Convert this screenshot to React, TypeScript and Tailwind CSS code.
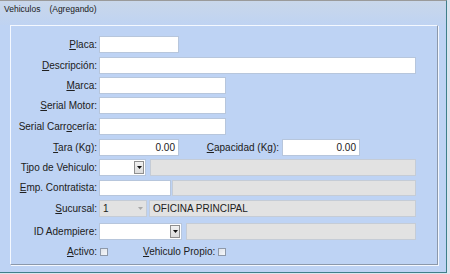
import React from "react";

const font = { fontFamily: '"Liberation Sans", Arial, sans-serif' };

function Lbl({ text, u, w = "w-[86px]" }: { text: string; u?: number; w?: string }) {
  let content: React.ReactNode = text;
  if (u !== undefined && u >= 0) {
    content = (
      <>
        {text.slice(0, u)}
        <span className="underline decoration-1 underline-offset-[1px]">{text[u]}</span>
        {text.slice(u + 1)}
      </>
    );
  }
  return (
    <div className={`${w} shrink-0 text-right text-[10px] leading-none text-[#202020] whitespace-nowrap`}>
      {content}
    </div>
  );
}

function Input({ w, value, right }: { w: string; value?: string; right?: boolean }) {
  return (
    <div
      className={`${w} h-full shrink-0 bg-white border border-[#b7c6dc] text-[10px] leading-none text-[#202020] flex items-center ${
        right ? "justify-end pr-[3px]" : "pl-[3px]"
      }`}
    >
      {value}
    </div>
  );
}

function Grey({ w, value, ml }: { w: string; value?: string; ml: string }) {
  return (
    <div
      className={`${w} ${ml} h-full shrink-0 bg-[#e2e2e2] border border-[#c5ccd6] text-[10px] leading-none text-[#202020] flex items-center pl-[3px]`}
    >
      {value}
    </div>
  );
}

function Arrow({ color = "#111" }: { color?: string }) {
  return (
    <svg width="5" height="3" viewBox="0 0 5 3">
      <path d="M0 0H5L2.5 3Z" fill={color} />
    </svg>
  );
}

function Combo({ w, value, disabled }: { w: string; value?: string; disabled?: boolean }) {
  return (
    <div
      className={`${w} h-full shrink-0 border ${
        disabled ? "bg-[#e2e2e2] border-[#c5ccd6]" : "bg-white border-[#b7c6dc]"
      } flex items-center justify-between pl-[3px] pr-[1px] text-[10px] leading-none text-[#202020]`}
    >
      <span>{value}</span>
      {disabled ? (
        <div className="w-[10px] h-[13px] flex items-center justify-center">
          <Arrow color="#a8a8a8" />
        </div>
      ) : (
        <div className="w-[10px] h-[13px] bg-gradient-to-b from-[#f2f2f2] to-[#dcdcdc] border border-[#8f8f8f] flex items-center justify-center">
          <Arrow />
        </div>
      )}
    </div>
  );
}

function Row({ mt, h = "h-[17px]", children }: { mt: string; h?: string; children: React.ReactNode }) {
  return <div className={`flex items-center ${mt} ${h}`}>{children}</div>;
}

export default function App() {
  return (
    <div className="w-[450px] h-[274px] bg-[#dbe5ef] overflow-hidden" style={font}>
      <div className="w-[447px] h-[273px] bg-[#bed3f4] border-t border-[#9a9a9a] border-r border-b border-r-[#3f7f8a] border-b-[#3f7f8a] flex flex-col">
        <div className="h-[24px] shrink-0 bg-gradient-to-b from-[#c9d7ea] to-[#bfd3f2] flex items-start pt-[4px] pl-[4px] text-[8.5px] leading-none text-[#1a1a1a]">
          <span>Vehiculos</span>
          <span className="ml-[9px]">(Agregando)</span>
        </div>
        <div className="ml-[10px] w-[428px] h-[240px] border-t border-l border-t-[#f4f8ff] border-l-[#f4f8ff] border-r border-b border-r-[#8b98ab] border-b-[#8b98ab] shadow-[1px_1px_0_#f4f8ff] flex flex-col">
          <Row mt="mt-[10px]">
            <Lbl text="Placa:" u={0} />
            <div className="ml-[2px] h-full flex">
              <Input w="w-[80px]" />
            </div>
          </Row>
          <Row mt="mt-[4px]">
            <Lbl text="Descripción:" u={0} />
            <div className="ml-[2px] h-full flex">
              <Input w="w-[317px]" />
            </div>
          </Row>
          <Row mt="mt-[3px]">
            <Lbl text="Marca:" u={0} />
            <div className="ml-[2px] h-full flex">
              <Input w="w-[127px]" />
            </div>
          </Row>
          <Row mt="mt-[3px]">
            <Lbl text="Serial Motor:" u={0} />
            <div className="ml-[2px] h-full flex">
              <Input w="w-[127px]" />
            </div>
          </Row>
          <Row mt="mt-[4px]">
            <Lbl text="Serial Carrocería:" u={11} />
            <div className="ml-[2px] h-full flex">
              <Input w="w-[127px]" />
            </div>
          </Row>
          <Row mt="mt-[4px]">
            <Lbl text="Tara (Kg):" u={0} />
            <div className="ml-[2px] h-full flex items-center">
              <Input w="w-[80px]" value="0.00" right />
              <Lbl text="Capacidad (Kg):" u={0} w="w-[100px]" />
              <div className="ml-[3px] h-full flex">
                <Input w="w-[78px]" value="0.00" right />
              </div>
            </div>
          </Row>
          <Row mt="mt-[3px]">
            <Lbl text="Tipo de Vehiculo:" u={1} />
            <div className="ml-[2px] h-full flex">
              <Combo w="w-[47px]" />
              <Grey w="w-[266px]" ml="ml-[4px]" />
            </div>
          </Row>
          <Row mt="mt-[4px]" h="h-[16px]">
            <Lbl text="Emp. Contratista:" u={0} />
            <div className="ml-[2px] h-full flex">
              <Input w="w-[72px]" />
              <Grey w="w-[244px]" ml="ml-[1px]" />
            </div>
          </Row>
          <Row mt="mt-[4px]">
            <Lbl text="Sucursal:" u={0} />
            <div className="ml-[2px] h-full flex">
              <Combo w="w-[48px]" value="1" disabled />
              <Grey w="w-[267px]" ml="ml-[2px]" value="OFICINA PRINCIPAL" />
            </div>
          </Row>
          <Row mt="mt-[6px]">
            <Lbl text="ID Adempiere:" />
            <div className="ml-[2px] h-full flex">
              <Combo w="w-[83px]" />
              <Grey w="w-[230px]" ml="ml-[4px]" />
            </div>
          </Row>
          <Row mt="mt-[7px]" h="h-[9px]">
            <Lbl text="Activo:" u={0} />
            <div className="ml-[3px] w-[8px] h-[8px] border border-[#8e99aa] bg-gradient-to-br from-[#dfe3ea] to-[#f5f7fa]" />
            <div className="ml-[35px] text-[10px] leading-none text-[#202020] whitespace-nowrap">
              <span className="underline decoration-1 underline-offset-[1px]">V</span>ehiculo Propio:
            </div>
            <div className="ml-[3px] w-[8px] h-[8px] border border-[#8e99aa] bg-gradient-to-br from-[#dfe3ea] to-[#f5f7fa]" />
          </Row>
        </div>
      </div>
    </div>
  );
}
